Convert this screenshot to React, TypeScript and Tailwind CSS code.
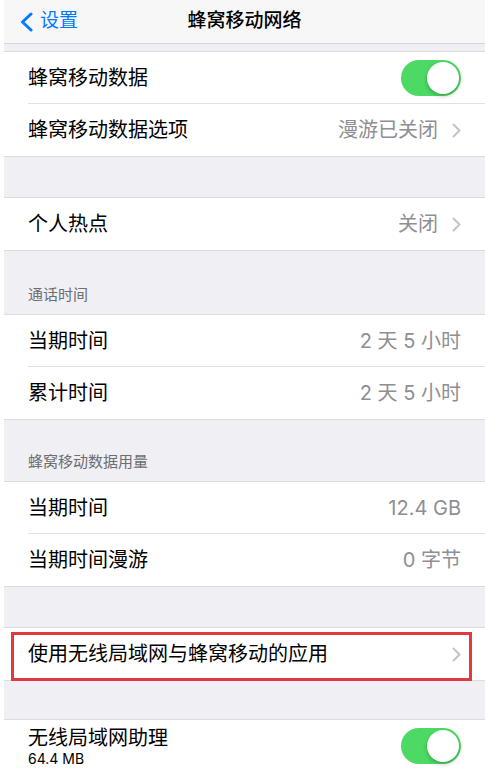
import React from 'react';

const font = { fontFamily: '"Inter", "Noto Sans CJK SC", sans-serif' };

const groupLine = 'shadow-[0_-1px_0_#dcdce0,0_1px_0_#dcdce0]';

function Chevron() {
    return (
        <svg width="9" height="15" viewBox="0 0 9 15" className="ml-[14px] shrink-0">
            <path d="M1.5 1.5 L7.5 7.5 L1.5 13.5" fill="none" stroke="#c4c4c9" strokeWidth="2" strokeLinecap="round" strokeLinejoin="round" />
        </svg>
    );
}

function Toggle() {
    return (
        <div className="w-[60px] h-[36px] rounded-full bg-[#4cd964] relative shrink-0">
            <div className="absolute right-[2px] top-[2px] w-[32px] h-[32px] rounded-full bg-white shadow-[0_2px_4px_rgba(0,0,0,0.25)]" />
        </div>
    );
}

function Row({ title, value, chevron, toggle, last }: { title: string; value?: string; chevron?: boolean; toggle?: boolean; last?: boolean }) {
    return (
        <div className="bg-white pl-6 h-[52px]">
            <div className={`h-full flex items-center pr-6 ${last ? '' : 'border-b border-[#e2e2e6]'}`}>
                <span className="flex-1 text-[20px] text-black">{title}</span>
                {value && <span className="text-[20px] text-[#8e8e93]">{value}</span>}
                {chevron && <Chevron />}
                {toggle && <Toggle />}
            </div>
        </div>
    );
}

function Header({ label, h }: { label: string; h: string }) {
    return (
        <div className={`${h} flex items-end pl-6 pb-[9px] text-[15px] text-[#6d6d72]`}>{label}</div>
    );
}

export default function App() {
    return (
        <div className="w-[485px] h-[773px] overflow-hidden bg-white pl-1" style={font}>
            <div className="bg-[#efeff4] h-full">
                <div className="h-11 bg-[#f7f7f7] border-b border-[#d6d6da] flex items-center relative">
                    <div className="flex items-center pl-[14px] text-[#007aff] text-[19px]">
                        <svg width="18" height="20" viewBox="0 0 18 20">
                            <path d="M13 2 L4.5 10 L13 18" fill="none" stroke="#007aff" strokeWidth="3" strokeLinecap="round" strokeLinejoin="round" />
                        </svg>
                        <span className="ml-[4px]">设置</span>
                    </div>
                    <div className="absolute left-0 right-0 text-center text-[19px] font-medium text-black pointer-events-none">蜂窝移动网络</div>
                </div>
                <div className="h-2" />
                <div className={groupLine}>
                    <Row title="蜂窝移动数据" toggle />
                    <Row title="蜂窝移动数据选项" value="漫游已关闭" chevron last />
                </div>
                <div className="h-[42px]" />
                <div className={groupLine}>
                    <Row title="个人热点" value="关闭" chevron last />
                </div>
                <Header label="通话时间" h="h-[65px]" />
                <div className={groupLine}>
                    <Row title="当期时间" value="2 天 5 小时" />
                    <Row title="累计时间" value="2 天 5 小时" last />
                </div>
                <Header label="蜂窝移动数据用量" h="h-[63px]" />
                <div className={groupLine}>
                    <Row title="当期时间" value="12.4 GB" />
                    <Row title="当期时间漫游" value="0 字节" last />
                </div>
                <div className="h-[42px]" />
                <div className={`relative ${groupLine}`}>
                    <Row title="使用无线局域网与蜂窝移动的应用" chevron last />
                    <div className="absolute left-[7px] right-[13px] top-[4px] bottom-[-1px] border-[3px] border-[#e2393f]" />
                </div>
                <div className="h-[40px]" />
                <div className={`bg-white pl-6 pr-6 h-[53px] flex items-start pt-[5px] ${groupLine}`}>
                    <div className="flex-1 flex flex-col">
                        <span className="text-[20px] text-black leading-[26px]">无线局域网助理</span>
                        <span className="text-[14px] text-black leading-[16px]">64.4 MB</span>
                    </div>
                    <div className="mt-[3px]">
                        <Toggle />
                    </div>
                </div>
            </div>
        </div>
    );
}
